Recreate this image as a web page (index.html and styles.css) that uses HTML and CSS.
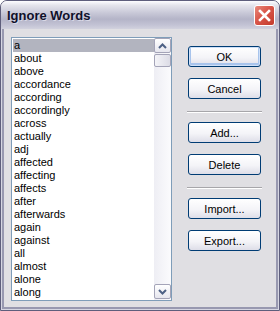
FILE: index.html
```html
<!DOCTYPE html>
<html lang="en">
<head>
    <meta charset="UTF-8">
    <title>Ignore Words</title>
    <link rel="stylesheet" href="styles.css">
</head>
<body>
    <div class="window">
        <div class="titlebar">
            <span class="title">Ignore Words</span>
            <div class="close">
                <svg width="13" height="13" viewBox="0 0 13 13">
                    <path d="M2 2 L11 11 M11 2 L2 11" stroke="#fff" stroke-width="2.6" stroke-linecap="square"/>
                </svg>
            </div>
        </div>
        <div class="frame">
            <div class="body">
                <div class="listbox">
                    <ul class="items">
                        <li class="selected">a</li>
                        <li>about</li>
                        <li>above</li>
                        <li>accordance</li>
                        <li>according</li>
                        <li>accordingly</li>
                        <li>across</li>
                        <li>actually</li>
                        <li>adj</li>
                        <li>affected</li>
                        <li>affecting</li>
                        <li>affects</li>
                        <li>after</li>
                        <li>afterwards</li>
                        <li>again</li>
                        <li>against</li>
                        <li>all</li>
                        <li>almost</li>
                        <li>alone</li>
                        <li>along</li>
                    </ul>
                    <div class="scrollbar">
                        <div class="arrow">
                            <svg width="9" height="6" viewBox="0 0 9 6"><polyline points="1,5 4.5,1.5 8,5" fill="none" stroke="#4d6185" stroke-width="2"/></svg>
                        </div>
                        <div class="thumb"></div>
                        <div class="track"></div>
                        <div class="arrow">
                            <svg width="9" height="6" viewBox="0 0 9 6"><polyline points="1,1 4.5,4.5 8,1" fill="none" stroke="#4d6185" stroke-width="2"/></svg>
                        </div>
                    </div>
                </div>
                <div class="buttons">
                    <button class="btn default">OK</button>
                    <button class="btn">Cancel</button>
                    <div class="sep"></div>
                    <button class="btn">Add...</button>
                    <button class="btn">Delete</button>
                    <div class="sep"></div>
                    <button class="btn">Import...</button>
                    <button class="btn">Export...</button>
                </div>
            </div>
        </div>
    </div>
</body>
</html>
```
FILE: styles.css
```css
html, body {
    margin: 0;
    padding: 0;
    background: #ffffff;
}

body {
    font-family: "Liberation Sans", Arial, sans-serif;
    font-size: 11px;
}

.window {
    width: 280px;
    height: 311px;
    box-sizing: border-box;
    border: 1px solid #5e5e7c;
    border-radius: 7px 7px 0 0;
    background: #e0dfe3;
    display: flex;
    flex-direction: column;
    overflow: hidden;
}

.titlebar {
    height: 28px;
    display: flex;
    align-items: center;
    justify-content: space-between;
    padding: 0 4px 0 6px;
    background: linear-gradient(#fdfdff, #e4e4ec 15%, #c6c6d6 45%, #b4b4c8 65%, #c2c2d4 85%, #d2d2de);
}

.title {
    font-weight: bold;
    font-size: 13px;
    color: #10102a;
    text-shadow: 1px 1px 0 #d8d8e6;
    margin-top: 1px;
}

.close {
    width: 19px;
    height: 19px;
    border: 1px solid #ffffff;
    border-radius: 3px;
    background: linear-gradient(135deg, #e88a7c, #d9564a 45%, #c23a2c);
    display: flex;
    align-items: center;
    justify-content: center;
    margin-top: 1px;
}

.frame {
    flex: 1;
    border: 1px solid #d6d6e2;
    border-top: 0;
    display: flex;
}

.body {
    flex: 1;
    border: 2px solid #9898b0;
    border-top: 0;
    display: flex;
    align-items: flex-start;
    padding: 8px 0 0 7px;
}

.listbox {
    width: 161px;
    height: 264px;
    box-sizing: border-box;
    border: 1px solid #7f9db9;
    background: #ffffff;
    display: flex;
}

.items {
    flex: 1;
    list-style: none;
    margin: 0;
    padding: 1px 0 0 1px;
}

.items li {
    height: 13px;
    line-height: 13px;
    padding-left: 1px;
    color: #000000;
}

.items li.selected {
    background: #b2b4bf;
}

.scrollbar {
    width: 17px;
    display: flex;
    flex-direction: column;
    background: linear-gradient(90deg, #eeeef4, #fbfbfd);
}

.arrow {
    height: 15px;
    margin: 1px 0;
    box-sizing: border-box;
    border: 1px solid #a4a4b8;
    border-radius: 2px;
    background: linear-gradient(#ffffff, #e6e6ee);
    display: flex;
    align-items: center;
    justify-content: center;
}

.arrow:first-child {
    margin-top: 0;
}

.thumb {
    height: 13px;
    box-sizing: border-box;
    border: 1px solid #a4a4b8;
    border-radius: 2px;
    background: linear-gradient(90deg, #f4f4f8, #dcdce6);
}

.track {
    flex: 1;
}

.buttons {
    display: flex;
    flex-direction: column;
    margin-left: 16px;
    padding-top: 9px;
}

.btn {
    width: 73px;
    height: 21px;
    margin: 0 0 11px;
    padding: 0;
    box-sizing: border-box;
    border: 1px solid #003c74;
    border-radius: 3px;
    background: linear-gradient(#ffffff, #f4f4f8 55%, #dedee8);
    font-family: "Liberation Sans", Arial, sans-serif;
    font-size: 11px;
    color: #000000;
}

.btn.default {
    box-shadow: inset 0 0 0 1px #cfe0f8, inset 0 -1px 0 2px #a8c4ec;
}

.sep {
    width: 75px;
    margin: 1px 0 9px -1px;
    border-top: 1px solid #a7a6aa;
    border-bottom: 1px solid #ffffff;
}
```
